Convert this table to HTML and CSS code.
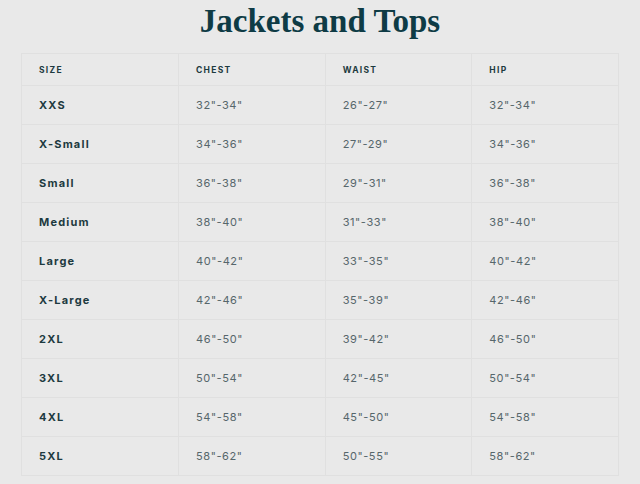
FILE: index.html
```html
<!DOCTYPE html>
<html>
<head>
<meta charset="utf-8">
<link rel="stylesheet" href="styles.css">
</head>
<body>
<h1 class="title">Jackets and Tops</h1>
<table class="chart">
  <thead>
    <tr><th>SIZE</th><th>CHEST</th><th>WAIST</th><th>HIP</th></tr>
  </thead>
  <tbody>
    <tr><td class="size">XXS</td><td>32"-34"</td><td>26"-27"</td><td>32"-34"</td></tr>
    <tr><td class="size">X-Small</td><td>34"-36"</td><td>27"-29"</td><td>34"-36"</td></tr>
    <tr><td class="size">Small</td><td>36"-38"</td><td>29"-31"</td><td>36"-38"</td></tr>
    <tr><td class="size">Medium</td><td>38"-40"</td><td>31"-33"</td><td>38"-40"</td></tr>
    <tr><td class="size">Large</td><td>40"-42"</td><td>33"-35"</td><td>40"-42"</td></tr>
    <tr><td class="size">X-Large</td><td>42"-46"</td><td>35"-39"</td><td>42"-46"</td></tr>
    <tr><td class="size">2XL</td><td>46"-50"</td><td>39"-42"</td><td>46"-50"</td></tr>
    <tr><td class="size">3XL</td><td>50"-54"</td><td>42"-45"</td><td>50"-54"</td></tr>
    <tr><td class="size">4XL</td><td>54"-58"</td><td>45"-50"</td><td>54"-58"</td></tr>
    <tr><td class="size">5XL</td><td>58"-62"</td><td>50"-55"</td><td>58"-62"</td></tr>
  </tbody>
</table>
</body>
</html>
```
FILE: styles.css
```css
html, body {
  margin: 0;
  padding: 0;
  background: #e9e9e9;
}
body {
  padding: 0 21px;
  font-family: "Inter", "Open Sans", sans-serif;
}
.title {
  margin: 0;
  padding-top: 1px;
  height: 52px;
  text-align: center;
  font-family: "Liberation Serif", serif;
  font-weight: 700;
  font-size: 33px;
  line-height: 40px;
  color: #0e3b45;
}
.chart {
  width: 598px;
  border-collapse: collapse;
  table-layout: fixed;
  border: 1px solid #e0e0e0;
}
.chart th, .chart td {
  border: 1px solid #e0e0e0;
  padding: 0 0 0 17px;
  text-align: left;
}
.chart th:first-child, .chart td:first-child { width: 139px; }
.chart th {
  height: 31px;
  font-size: 8.5px;
  font-weight: 700;
  letter-spacing: 1.3px;
  color: #1d3a40;
}
.chart td {
  height: 38px;
  font-size: 11px;
  letter-spacing: 0.6px;
  color: #56666b;
}
.chart td.size {
  font-weight: 700;
  color: #1d3a40;
  letter-spacing: 1.2px;
}
```
